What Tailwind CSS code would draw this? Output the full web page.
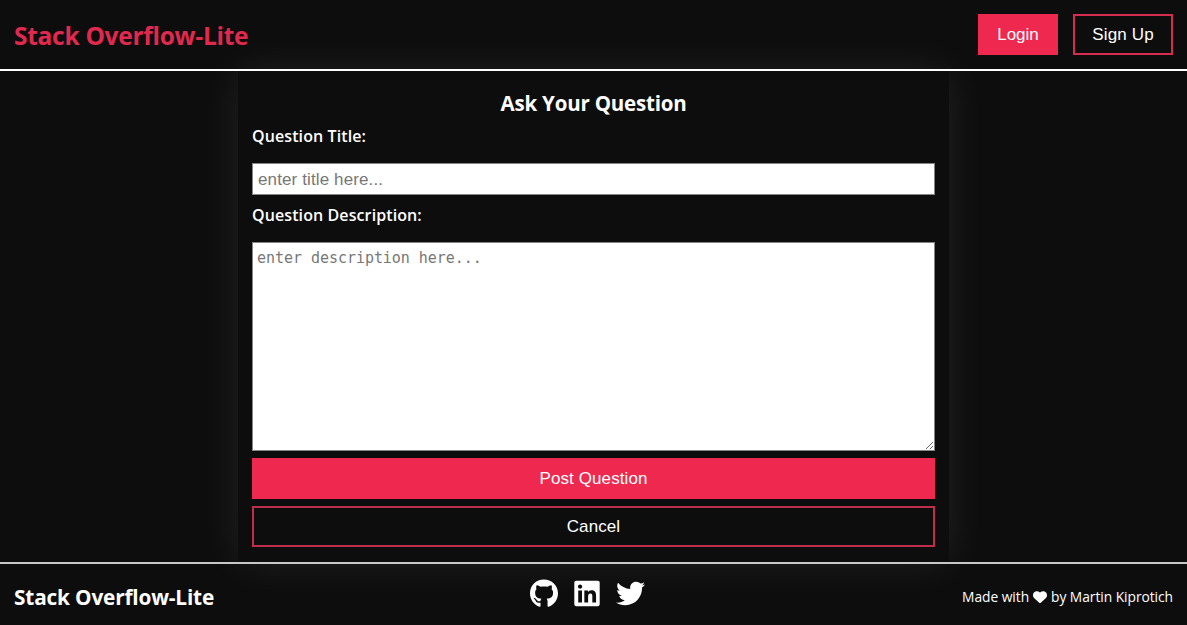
<!DOCTYPE html>
<html lang="en">
<head>
<meta charset="utf-8">
<title>Stack Overflow-Lite</title>
<script src="https://cdn.jsdelivr.net/npm/@tailwindcss/browser@4"></script>
</head>
<body class="flex h-[625px] flex-col overflow-hidden bg-[#0d0d0d] font-['Open_Sans','Noto_Sans',sans-serif] text-white">
<header class="flex h-[71px] shrink-0 items-center justify-between border-b-2 border-white px-[14px]">
  <h1 class="mt-[2px] text-[24.5px] leading-8 font-bold tracking-[-0.28px] whitespace-nowrap text-[#e0294f]">Stack Overflow-Lite</h1>
  <nav class="flex gap-[15px] font-['Liberation_Sans',sans-serif] text-[17px]">
    <button class="h-[41px] w-[80px] bg-[#ee284f] pt-px">Login</button>
    <button class="h-[41px] w-[100px] border-2 border-[#d82b50] pt-px tracking-[0.15px]">Sign Up</button>
  </nav>
</header>
<main class="mx-auto flex h-[491px] w-[711px] shrink-0 flex-col px-[14px] pt-[18px] shadow-[0_0_40px_rgba(255,255,255,0.09)]">
  <h2 class="h-7 text-center text-[20.5px] leading-7 font-bold tracking-[-0.2px]">Ask Your Question</h2>
  <label class="mt-[7px] h-6 text-[16px] leading-6 font-semibold tracking-[0.1px]">Question Title:</label>
  <input class="mt-[15px] h-[32px] shrink-0 border border-[#858585] bg-white px-[5px] pt-px font-['Liberation_Sans',sans-serif] text-[17px] tracking-[0.12px] placeholder:text-[#777]" placeholder="enter title here...">
  <label class="mt-[8px] h-6 text-[16px] leading-6 font-semibold tracking-[0.1px]">Question Description:</label>
  <textarea class="mt-[15px] h-[209px] shrink-0 resize border border-[#858585] bg-white px-[4px] pt-[5px] font-['DejaVu_Sans_Mono',monospace] text-[15px] leading-5 tracking-[-0.04px] placeholder:text-[#777]" placeholder="enter description here..."></textarea>
  <button class="mt-[7px] h-[41px] shrink-0 bg-[#ee284f] pt-px font-['Liberation_Sans',sans-serif] text-[17px] tracking-[0.1px]">Post Question</button>
  <button class="mt-[7px] h-[41px] shrink-0 border-2 border-[#c02d4c] pt-px font-['Liberation_Sans',sans-serif] text-[17px] tracking-[0.1px]">Cancel</button>
</main>
<footer class="grid h-[63px] shrink-0 grid-cols-[1fr_auto_1fr] items-center border-t-2 border-[#c8c8c8] px-[14px]">
  <h3 class="mt-[4px] text-[20.8px] leading-7 font-bold tracking-[-0.17px] whitespace-nowrap">Stack Overflow-Lite</h3>
  <div class="mr-[13px] mb-[2px] flex items-center gap-[16px]">
    <svg class="h-[29px] w-[28px]" viewBox="0 0 496 512" fill="currentColor"><path d="M165.900 397.400c0 2-2.300 3.600-5.200 3.600-3.300.3-5.600-1.300-5.600-3.600 0-2 2.300-3.600 5.200-3.600 3-.3 5.600 1.300 5.600 3.600zm-31.100-4.500c-.7 2 1.300 4.300 4.300 4.900 2.600 1 5.600 0 6.200-2s-1.300-4.300-4.300-5.200c-2.600-.7-5.500.3-6.200 2.300zm44.200-1.700c-2.900.7-4.900 2.600-4.600 4.900.3 2 2.900 3.300 5.900 2.600 2.900-.7 4.900-2.600 4.600-4.600-.3-1.900-3-3.200-5.900-2.900zM244.800 8C106.100 8 0 113.300 0 252c0 110.900 69.800 205.800 169.500 239.200 12.800 2.300 17.300-5.600 17.300-12.100 0-6.200-.3-40.400-.3-61.400 0 0-70 15-84.700-29.800 0 0-11.400-29.100-27.800-36.600 0 0-22.900-15.700 1.600-15.400 0 0 24.900 2 38.600 25.800 21.900 38.600 58.600 27.500 72.900 20.900 2.300-16 8.800-27.100 16-33.700-55.900-6.200-112.300-14.300-112.300-110.500 0-27.500 7.600-41.300 23.600-58.900-2.600-6.500-11.100-33.300 2.600-67.900 20.900-6.500 69 27 69 27 20-5.600 41.500-8.500 62.800-8.500s42.800 2.900 62.800 8.500c0 0 48.100-33.600 69-27 13.700 34.700 5.200 61.400 2.600 67.900 16 17.700 25.800 31.500 25.800 58.900 0 96.500-58.900 104.200-114.800 110.500 9.200 7.900 17 22.900 17 46.400 0 33.700-.3 75.400-.3 83.600 0 6.500 4.600 14.400 17.300 12.100C428.200 457.800 496 362.900 496 252 496 113.300 383.500 8 244.800 8z"/></svg>
    <svg class="h-[29px] w-[26px]" viewBox="0 0 448 512" fill="currentColor"><path d="M416 32H31.900C14.300 32 0 46.500 0 64.300v383.400C0 465.500 14.300 480 31.900 480H416c17.600 0 32-14.500 32-32.300V64.300c0-17.800-14.400-32.300-32-32.300zM135.400 416H69V202.200h66.500V416zm-33.200-243c-21.300 0-38.500-17.300-38.500-38.500S80.900 96 102.200 96c21.200 0 38.500 17.300 38.500 38.500 0 21.300-17.200 38.500-38.500 38.500zm282.100 243h-66.400V312c0-24.800-.5-56.700-34.500-56.700-34.600 0-39.900 27-39.900 54.900V416h-66.400V202.200h63.700v29.200h.9c8.900-16.800 30.600-34.500 62.900-34.500 67.200 0 79.700 44.300 79.700 101.900V416z"/></svg>
    <svg class="h-[29px] w-[29px]" viewBox="0 0 512 512" fill="currentColor"><path d="M459.370 151.716c.325 4.548.325 9.097.325 13.645 0 138.720-105.583 298.558-298.558 298.558-59.452 0-114.680-17.219-161.137-47.106 8.447.974 16.568 1.299 25.340 1.299 49.055 0 94.213-16.568 130.274-44.832-46.132-.975-84.792-31.188-98.112-72.772 6.498.974 12.995 1.624 19.818 1.624 9.421 0 18.843-1.300 27.614-3.573-48.081-9.747-84.143-51.980-84.143-102.985v-1.299c13.969 7.797 30.214 12.670 47.431 13.319-28.264-18.843-46.781-51.005-46.781-87.391 0-19.492 5.197-37.360 14.294-52.954 51.655 63.675 129.300 105.258 216.365 109.807-1.624-7.797-2.599-15.918-2.599-24.040 0-57.828 46.782-104.934 104.934-104.934 30.213 0 57.502 12.670 76.670 33.137 23.715-4.548 46.456-13.320 66.599-25.340-7.798 24.366-24.366 44.833-46.132 57.827 21.117-2.273 41.584-8.122 60.426-16.243-14.292 20.791-32.161 39.308-52.628 54.253z"/></svg>
  </div>
  <p class="mt-[4px] flex items-center justify-end gap-[4px] text-[13.8px] leading-5 whitespace-nowrap"><span class="tracking-[-0.04px]">Made with</span>
    <svg class="h-[14px] w-[14px]" viewBox="0 0 512 512" fill="currentColor"><path d="M47.600 300.400L228.300 469.100c7.500 7 17.400 10.900 27.700 10.900s20.200-3.900 27.700-10.900L464.400 300.400c30.400-28.300 47.600-68 47.600-109.500v-5.800c0-69.900-50.500-129.500-119.400-141C347 36.500 300.600 51.400 268 84L256 96 244 84c-32.600-32.600-79-47.500-124.600-39.900C50.500 55.600 0 115.200 0 185.100v5.800c0 41.500 17.200 81.200 47.600 109.500z"/></svg>
    <span class="tracking-[-0.05px]">by Martin Kiprotich</span></p>
</footer>
</body>
</html>
